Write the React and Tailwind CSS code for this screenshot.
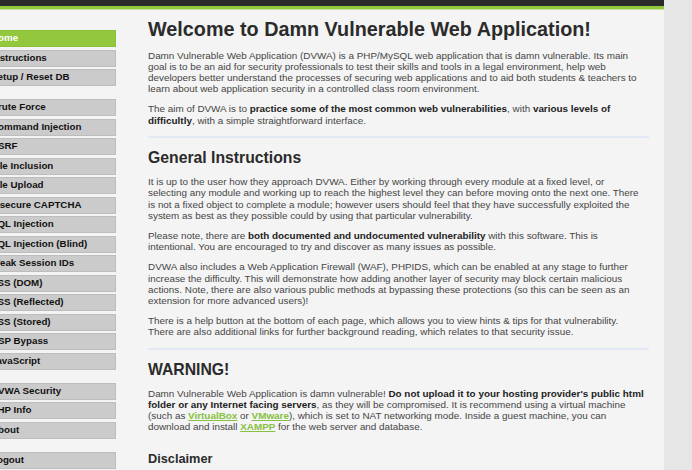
const menuGroups = [
  ["Home", "Instructions", "Setup / Reset DB"],
  [
    "Brute Force",
    "Command Injection",
    "CSRF",
    "File Inclusion",
    "File Upload",
    "Insecure CAPTCHA",
    "SQL Injection",
    "SQL Injection (Blind)",
    "Weak Session IDs",
    "XSS (DOM)",
    "XSS (Reflected)",
    "XSS (Stored)",
    "CSP Bypass",
    "JavaScript",
  ],
  ["DVWA Security", "PHP Info", "About"],
  ["Logout"],
];

const MenuItem = ({ label, selected }) => (
  <div
    className={
      selected
        ? "h-[17px] mb-[2.5px] w-[146px] flex items-center pl-[20px] border border-[#8cbf3a] bg-[#93c73e] text-white text-[9.75px] font-bold"
        : "h-[17px] mb-[2.5px] w-[146px] flex items-center pl-[20px] border border-[#bdbdbd] bg-[#cbcbcb] text-[#111] text-[9.75px] font-bold"
    }
  >
    <span className="whitespace-nowrap">{label}</span>
  </div>
);

const Sidebar = () => (
  <nav className="w-[148px] shrink-0 pt-[20px] -ml-[30px]">
    {menuGroups.map((group, i) => (
      <div key={i} className="mb-[13px]">
        {group.map((label) => (
          <MenuItem key={label} label={label} selected={label === "Home"} />
        ))}
      </div>
    ))}
  </nav>
);

const P = ({ children }) => (
  <p className="mt-[9px] text-[9.9px] leading-[11.2px] text-[#454545] whitespace-nowrap">
    {children}
  </p>
);

const B = ({ children }) => <b className="font-bold text-[#222]">{children}</b>;

const A = ({ children }) => (
  <a className="font-bold text-[#86c13f] underline">{children}</a>
);

const Rule = () => <div className="mt-[10px] h-[2px] w-[501px] bg-[#e3e9f4]" />;

const H2 = ({ children }) => (
  <h2 className="mt-[11.2px] text-[15.75px] leading-[18.1px] font-bold text-[#2b2b2b]">
    {children}
  </h2>
);

export default function App() {
  return (
    <div className="flex h-[470px] w-[692px] overflow-hidden bg-[#e6e6e6] font-['Liberation_Sans',Arial,sans-serif]">
      <div className="w-[664px] shrink-0 flex flex-col bg-[#f4f4f4]">
        <div className="h-[6px] shrink-0 bg-[#2a2a2a]" />
        <div className="h-[3px] shrink-0 bg-[#93c73e]" />
        <div className="h-[1px] shrink-0 bg-[#c9e39f]" />
        <div className="flex shrink-0">
          <Sidebar />
          <main className="w-[501px] pl-[30px]">
            <h1 className="mt-[7.8px] text-[19.8px] leading-[22.8px] font-bold text-[#2b2b2b] whitespace-nowrap">
              Welcome to Damn Vulnerable Web Application!
            </h1>
            <P>
              Damn Vulnerable Web Application (DVWA) is a PHP/MySQL web application that is damn vulnerable. Its main
              <br />
              goal is to be an aid for security professionals to test their skills and tools in a legal environment, help web
              <br />
              developers better understand the processes of securing web applications and to aid both students &amp; teachers to
              <br />
              learn about web application security in a controlled class room environment.
            </P>
            <P>
              The aim of DVWA is to <B>practice some of the most common web vulnerabilities</B>, with <B>various levels of</B>
              <br />
              <B>difficultly</B>, with a simple straightforward interface.
            </P>
            <Rule />
            <H2>General Instructions</H2>
            <div className="mt-[2px]">
              <P>
                It is up to the user how they approach DVWA. Either by working through every module at a fixed level, or
                <br />
                selecting any module and working up to reach the highest level they can before moving onto the next one. There
                <br />
                is not a fixed object to complete a module; however users should feel that they have successfully exploited the
                <br />
                system as best as they possible could by using that particular vulnerability.
              </P>
            </div>
            <P>
              Please note, there are <B>both documented and undocumented vulnerability</B> with this software. This is
              <br />
              intentional. You are encouraged to try and discover as many issues as possible.
            </P>
            <P>
              DVWA also includes a Web Application Firewall (WAF), PHPIDS, which can be enabled at any stage to further
              <br />
              increase the difficulty. This will demonstrate how adding another layer of security may block certain malicious
              <br />
              actions. Note, there are also various public methods at bypassing these protections (so this can be seen as an
              <br />
              extension for more advanced users)!
            </P>
            <P>
              There is a help button at the bottom of each page, which allows you to view hints &amp; tips for that vulnerability.
              <br />
              There are also additional links for further background reading, which relates to that security issue.
            </P>
            <Rule />
            <H2>WARNING!</H2>
            <P>
              Damn Vulnerable Web Application is damn vulnerable! <B>Do not upload it to your hosting provider's public html</B>
              <br />
              <B>folder or any Internet facing servers</B>, as they will be compromised. It is recommend using a virtual machine
              <br />
              (such as <A>VirtualBox</A> or <A>VMware</A>), which is set to NAT networking mode. Inside a guest machine, you can
              <br />
              download and install <A>XAMPP</A> for the web server and database.
            </P>
            <h3 className="mt-[19px] text-[12.75px] leading-[14.7px] font-bold text-[#2b2b2b]">Disclaimer</h3>
          </main>
        </div>
      </div>
    </div>
  );
}
